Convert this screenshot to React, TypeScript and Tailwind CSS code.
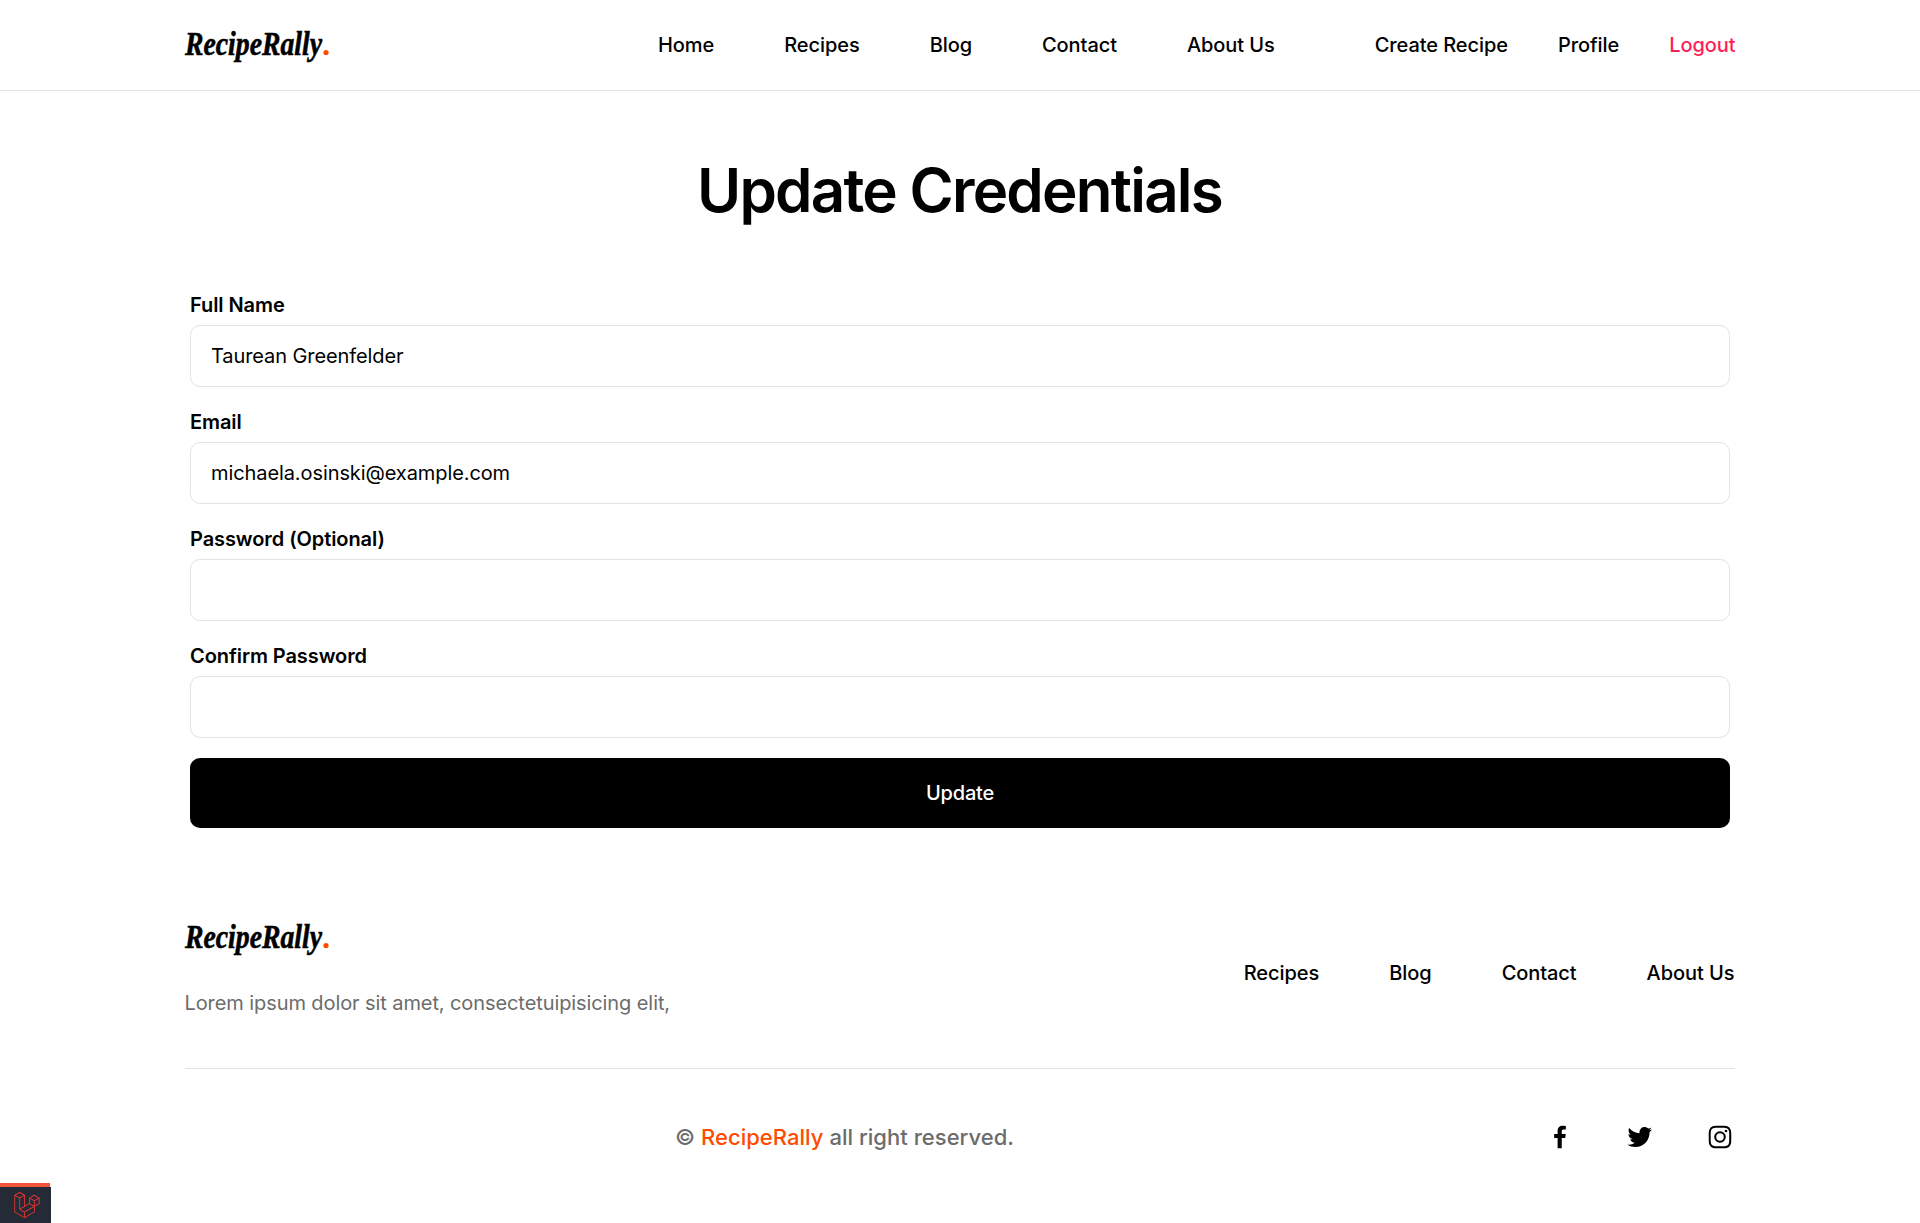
import React from "react";
import { BiLogoFacebook, BiLogoTwitter, BiLogoInstagram } from "react-icons/bi";
import { SiLaravel } from "react-icons/si";

function Logo() {
  return (
    <svg width="146" height="40" viewBox="0 0 146 40" className="block overflow-visible" aria-label="RecipeRally">
      <text
        x="0"
        y="30"
        textLength="137"
        lengthAdjust="spacingAndGlyphs"
        className="fill-black stroke-black font-['Liberation_Serif',serif] text-[33px] font-bold italic"
        strokeWidth="0.6"
      >
        RecipeRally
      </text>
      <circle cx="141" cy="27.5" r="2.6" className="fill-[#ff4a00]" />
    </svg>
  );
}

function Field({ label, type = "text", value = "" }: { label: string; type?: string; value?: string }) {
  return (
    <div className="mb-5">
      <label className="mb-[5px] block text-[20px] leading-[30px] font-semibold tracking-[-0.08px]">{label}</label>
      <input
        type={type}
        defaultValue={value}
        className="block h-[62px] w-full rounded-[10px] border border-[#e3e3e3] bg-white px-5 text-[20px] tracking-[-0.09px] outline-none"
      />
    </div>
  );
}

export default function App() {
  return (
    <div className="flex h-[1223px] flex-col overflow-hidden bg-white font-['Inter',sans-serif] text-[20px] leading-[30px] text-black">
      <header className="h-[91px] border-b border-[#e3e3e3]">
        <div className="mx-auto flex h-[90px] w-[1551px] items-center justify-between">
          <Logo />
          <div className="flex gap-[100px] font-medium tracking-[-0.07px]">
            <nav className="flex gap-[70px]">
              <a>Home</a>
              <a>Recipes</a>
              <a>Blog</a>
              <a>Contact</a>
              <a>About Us</a>
            </nav>
            <div className="flex gap-[50px]">
              <a>Create Recipe</a>
              <a>Profile</a>
              <a className="text-[#ff1f57]">Logout</a>
            </div>
          </div>
        </div>
      </header>

      <main className="mx-auto w-[1540px] pt-[63px]">
        <h1 className="mb-[64px] pr-px text-center text-[60px] leading-[72px] font-semibold tracking-[-1.75px]">
          Update Credentials
        </h1>
        <form>
          <Field label="Full Name" value="Taurean Greenfelder" />
          <Field label="Email" value="michaela.osinski@example.com" />
          <Field label="Password (Optional)" type="password" />
          <Field label="Confirm Password" type="password" />
          <button
            type="button"
            className="block h-[70px] w-full rounded-[10px] bg-black text-[20px] font-medium tracking-[-0.2px] text-white"
          >
            Update
          </button>
        </form>
      </main>

      <footer className="mx-auto w-[1551px] pt-[90px] pr-px">
        <div className="flex h-[151px] items-start justify-between border-b border-[#e3e3e3]">
          <div>
            <Logo />
            <p className="mt-[30px] tracking-[-0.09px] text-[#6c6c6c]">
              Lorem ipsum dolor sit amet, consectetuipisicing elit,
            </p>
          </div>
          <nav className="mt-10 flex gap-[70px] font-medium tracking-[-0.06px]">
            <a>Recipes</a>
            <a>Blog</a>
            <a>Contact</a>
            <a>About Us</a>
          </nav>
        </div>
        <div className="mt-[53px] flex items-center justify-between">
          <p className="w-[1320px] text-center text-[22px] font-medium tracking-[0.03px] text-[#6c6c6c]">
            © <span className="text-[#ff4a00]">RecipeRally</span> all right reserved.
          </p>
          <div className="flex gap-[50px] text-[30px]">
            <BiLogoFacebook />
            <BiLogoTwitter />
            <BiLogoInstagram />
          </div>
        </div>
      </footer>

      <div className="absolute top-[1183px] left-0 h-10 w-[51px]">
        <div className="h-[4px] w-[50px] bg-[#f4513b]" />
        <div className="flex h-[36px] items-center justify-center bg-[#252a37] pl-[2px]">
          <SiLaravel className="size-[26px] text-[#f4352b]" />
        </div>
      </div>
    </div>
  );
}
